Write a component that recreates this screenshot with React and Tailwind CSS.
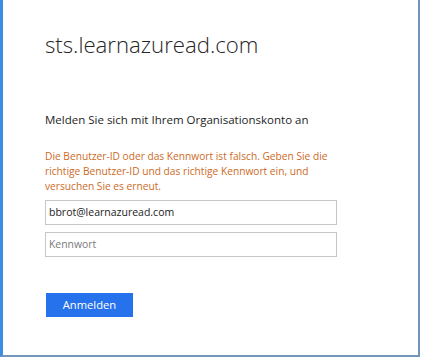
export default function App() {
  return (
    <div className="w-[421px] h-[357px] bg-white flex">
      <div className="flex-1 mr-[1px] flex flex-col border-l-[3px] border-l-[#3d8ee0] border-r-2 border-r-[#7094b9] border-b-2 border-b-[#7396ba] pl-[42px] bg-white font-['Open_Sans',sans-serif]">
        <h1 className="mt-[30px] text-[22.2px] leading-[30px] font-light text-[#262626]">sts.learnazuread.com</h1>
        <p className="mt-[52px] text-[11.5px] leading-[16px] text-[#1e1e1e]">Melden Sie sich mit Ihrem Organisationskonto an</p>
        <p className="mt-[21px] w-[292px] text-[10.2px] leading-[15px] text-[#cc6a27]">
          Die Benutzer-ID oder das Kennwort ist falsch. Geben Sie die richtige Benutzer-ID und das richtige Kennwort ein, und versuchen Sie es erneut.
        </p>
        <div className="mt-[6px] w-[292px] h-[25px] border border-[#c6c6c6] flex items-center px-[3px] text-[10.5px] text-[#222]">bbrot@learnazuread.com</div>
        <div className="mt-[7px] w-[292px] h-[25px] border border-[#c6c6c6] flex items-center px-[3px] text-[10.4px] text-[#7a7a7a]">Kennwort</div>
        <div className="mt-[34px]">
          <button className="w-[87px] h-[24px] bg-[#2672ec] text-white text-[11.2px] leading-[24px] ml-[1px]">Anmelden</button>
        </div>
      </div>
    </div>
  );
}
